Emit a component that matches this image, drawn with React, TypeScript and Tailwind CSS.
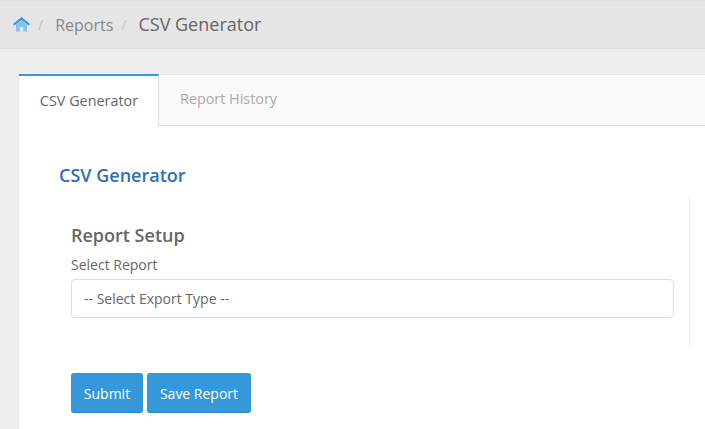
import React from "react";

const Home = () => (
  <svg width="17" height="15" viewBox="0 0 17 15" className="block">
    <path d="M3 7.5 L8.5 3.5 L14 7.5 V14.5 H10.3 V10 H6.7 V14.5 H3 Z" fill="#85c1e9" />
    <path d="M8.5 0 L0 7 L1.3 8.6 L8.5 2.9 L15.7 8.6 L17 7 Z" fill="#3498db" />
  </svg>
);

export default function App() {
  return (
    <div className="flex h-[429px] w-[705px] flex-col overflow-hidden bg-[#eeeeee] font-['Open_Sans',sans-serif] text-[#666666]">
      <div className="flex h-[49px] shrink-0 items-center border-y border-t-[#e0e0e0] border-b-[#dddddd] bg-[#e5e5e5] pl-[13px]">
        <Home />
        <span className="ml-[8px] text-[14px] text-[#c4c4c4]">/</span>
        <span className="ml-[12px] text-[16px] text-[#888888]">Reports</span>
        <span className="ml-[8px] text-[14px] text-[#c4c4c4]">/</span>
        <span className="ml-[12px] text-[18px] text-[#666666]">CSV Generator</span>
      </div>
      <div className="ml-[18px] mt-[25px] flex-1 border-l border-[#e8e8e8] bg-white">
        <div className="flex h-[52px] border-b border-[#dddddd] bg-[#f9f9f9]">
          <div className="-mb-px flex h-[52px] w-[140px] items-center justify-center border-r border-t-2 border-r-[#dddddd] border-t-[#3498db] bg-white pl-[1px] text-[14.4px] text-[#666666]">
            CSV Generator
          </div>
          <div className="flex w-[139px] items-center justify-center border-t border-[#e5e5e5] pb-[2px] text-[14.4px] text-[#aaaaaa]">
            Report History
          </div>
          <div className="flex-1 border-t border-[#e5e5e5]" />
        </div>
        <div className="pl-[40px] pt-[37px]">
          <h1 className="text-[18px] font-semibold leading-[25px] text-[#2f6eb5]">CSV Generator</h1>
          <div className="mt-[7px] flex h-[151px] w-[631px] flex-col border-r border-[#eeeeee] pl-[12px] pt-[28px]">
            <h2 className="text-[18px] font-semibold leading-[25px] text-[#666666]">Report Setup</h2>
            <label className="mt-[7px] block text-[14px] leading-[20px] text-[#666666]">Select Report</label>
            <div className="mt-[4px] flex h-[39px] w-[603px] items-center rounded-[4px] border border-[#dddddd] bg-white pl-[12px] text-[14px] text-[#666666]">
              -- Select Export Type --
            </div>
          </div>
          <div className="ml-[12px] mt-[27px] flex gap-[4px]">
            <button className="h-[40px] w-[72px] rounded-[3px] border border-[#3498db] border-b-[#2a80b9] bg-[#3498db] text-[14px] text-white">
              Submit
            </button>
            <button className="h-[40px] w-[104px] rounded-[3px] border border-[#3498db] border-b-[#2a80b9] bg-[#3498db] text-[14px] text-white">
              Save Report
            </button>
          </div>
        </div>
      </div>
    </div>
  );
}
